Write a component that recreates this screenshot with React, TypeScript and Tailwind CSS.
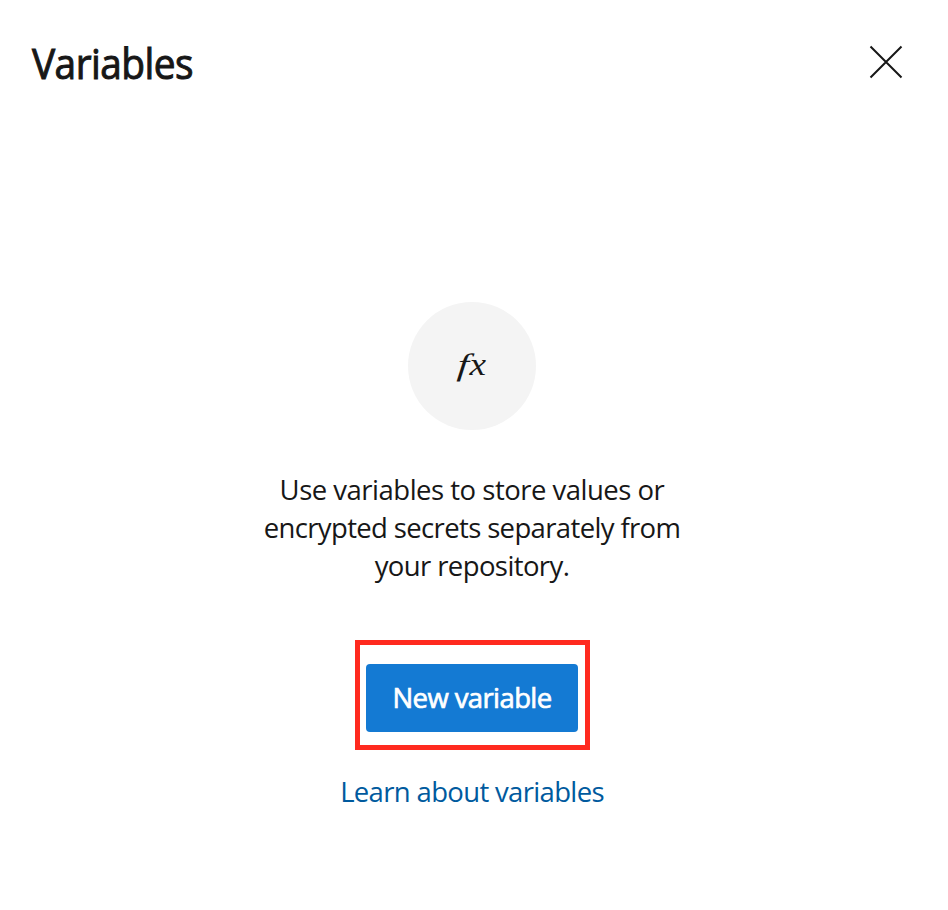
export default function App() {
  return (
    <main className="flex h-[910px] w-[948px] flex-col overflow-hidden bg-white font-['Open_Sans','Noto_Sans',sans-serif] text-[#171717]">
      <header className="flex h-[126px] shrink-0 items-start justify-between pl-8 pr-[45px] pt-[38px]">
        <h1 className="origin-left scale-x-[0.925] whitespace-nowrap text-[42px] font-normal leading-[50px] tracking-[-0.6px] [-webkit-text-stroke:1px_#171717]">Variables</h1>
        <button aria-label="Close" className="mt-[7px]">
          <svg width="34" height="34" viewBox="0 0 34 34" fill="none" stroke="#171717" strokeWidth="2"><path d="M1.5 1.5 32.5 32.5M32.5 1.5 1.5 32.5" /></svg>
        </button>
      </header>
      <section className="flex w-[944px] flex-col items-center pt-[176px]">
        <div className="flex size-32 items-center justify-center rounded-full bg-[#f4f4f4]">
          <span className="flex -translate-y-[2px] gap-[3px] font-['Liberation_Serif',serif] text-[31px] italic leading-none">
            <span className="-skew-x-[4deg] scale-x-[1.3]">f</span><span className="scale-x-[1.2]">x</span>
          </span>
        </div>
        <p className="mt-[41px] text-center text-[27.5px] leading-[38px] tracking-[-0.6px]">
          <span className="block tracking-[-0.5px]">Use variables to store values or</span>
          <span className="block tracking-[-0.64px]">encrypted secrets separately from</span>
          <span className="block">your repository.</span>
        </p>
        <div className="mt-[55px] flex h-[110px] w-[235px] items-center justify-center border-[5px] border-[#ff2a1f]">
          <button className="mt-[6px] h-[68px] w-[212px] rounded bg-[#147ad3] text-[27.5px] tracking-[-0.6px] text-white [-webkit-text-stroke:0.7px_white]">New variable</button>
        </div>
        <a className="mt-[23px] text-[27.5px] leading-[38px] tracking-[-0.66px] text-[#005a9e]">Learn about variables</a>
      </section>
    </main>
  );
}
